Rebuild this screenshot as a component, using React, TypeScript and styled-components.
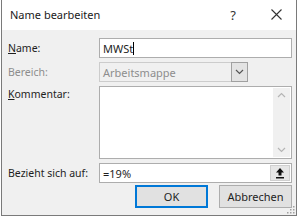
import * as React from 'react'
import styled, { createGlobalStyle } from 'styled-components'

const GlobalStyle = createGlobalStyle`
  html, body {
    margin: 0;
    padding: 0;
    background: #ffffff;
  }
  body {
    font-family: "Noto Sans", "DejaVu Sans", sans-serif;
    color: #1e1e1e;
  }
`

const Dialog = styled('div')`
  position: relative;
  margin-left: 1px;
  width: 294px;
  height: 215px;
  border: 1px solid #7a7a7a;
  border-top: none;
  background: #f0f0f0;
  display: flex;
  flex-direction: column;
`

const TitleBar = styled('div')`
  height: 30px;
  background: #ffffff;
  display: flex;
  align-items: center;
  padding-left: 8px;
  padding-bottom: 1px;
  box-sizing: border-box;
`

const Title = styled('div')`
  flex: 1;
  font-size: 11px;
  color: #1a1a1a;
`

const TitleButton = styled('div')<{ wide?: boolean }>`
  width: ${(p) => (p.wide ? '46px' : '40px')};
  height: 30px;
  display: flex;
  align-items: center;
  justify-content: center;
  color: #333;
  font-size: 13px;
`

const Body = styled('div')`
  padding: 8px 4px 0 6px;
  display: grid;
  grid-template-columns: 91px 193px;
  grid-template-rows: 20px 20px 73px 20px;
  row-gap: 4px;
  font-size: 10.5px;
`

const Label = styled('div')<{ disabled?: boolean; top?: boolean }>`
  display: flex;
  align-items: ${(p) => (p.top ? 'flex-start' : 'center')};
  padding-top: ${(p) => (p.top ? '1px' : '0')};
  color: ${(p) => (p.disabled ? '#8d8d8d' : '#1e1e1e')};
  u {
    text-decoration: underline;
    text-underline-offset: 1px;
  }
`

const Field = styled('div')<{ disabled?: boolean }>`
  box-sizing: border-box;
  border: 1px solid ${(p) => (p.disabled ? '#cccccc' : '#adadad')};
  background: ${(p) => (p.disabled ? '#f0f0f0' : '#ffffff')};
  color: ${(p) => (p.disabled ? '#8d8d8d' : '#1e1e1e')};
  display: flex;
  align-items: center;
  padding-left: 3px;
  font-size: 11px;
`

const Caret = styled('span')`
  display: inline-block;
  width: 1px;
  height: 13px;
  background: #000;
`

const SelectWrap = styled('div')`
  display: flex;
  width: 149px;
`

const SelectBox = styled(Field)`
  flex: 1;
  border-right: none;
`

const DropButton = styled('div')`
  width: 17px;
  box-sizing: border-box;
  border: 1px solid #a0a0a0;
  background: #e3e3e3;
  display: flex;
  align-items: center;
  justify-content: center;
`

const TextArea = styled('div')`
  box-sizing: border-box;
  border: 1px solid #adadad;
  background: #ffffff;
  display: flex;
  justify-content: flex-end;
  padding: 1px;
`

const ScrollBar = styled('div')`
  width: 17px;
  background: #f0f0f0;
  display: flex;
  flex-direction: column;
  justify-content: space-between;
  align-items: center;
  padding: 4px 0;
`

const RefField = styled(Field)`
  justify-content: space-between;
  padding-right: 1px;
`

const CollapseButton = styled('div')`
  width: 20px;
  height: 16px;
  box-sizing: border-box;
  border: 1px solid #cfcfcf;
  background: #e6e6e6;
  display: flex;
  align-items: center;
  justify-content: center;
`

const ButtonRow = styled('div')`
  display: flex;
  justify-content: flex-end;
  gap: 11px;
  padding: 2px 4px 0 0;
`

const Button = styled('div')<{ primary?: boolean }>`
  width: 73px;
  height: 23px;
  box-sizing: border-box;
  border: ${(p) => (p.primary ? '2px solid #0078d7' : '1px solid #adadad')};
  background: #e1e1e1;
  display: flex;
  align-items: center;
  justify-content: center;
  font-size: 11px;
  color: #1e1e1e;
`

const Grip = styled('svg')`
  position: absolute;
  right: 1px;
  bottom: 1px;
`

const Chevron = ({ up, color }: { up?: boolean; color: string }) => (
  <svg width="9" height="6" viewBox="0 0 9 6">
    <path
      d={up ? 'M1 5 L4.5 1.5 L8 5' : 'M1 1 L4.5 4.5 L8 1'}
      fill="none"
      stroke={color}
      strokeWidth="1.2"
    />
  </svg>
)

export default function App() {
  const dots = [
    [8, 2], [8, 5], [5, 5], [8, 8], [5, 8], [2, 8],
  ]
  return (
    <>
      <GlobalStyle />
      <Dialog>
        <TitleBar>
          <Title>Name bearbeiten</Title>
          <TitleButton wide>?</TitleButton>
          <TitleButton>
            <svg width="11" height="11" viewBox="0 0 11 11">
              <path d="M0.5 0.5 L10.5 10.5 M10.5 0.5 L0.5 10.5" stroke="#333" strokeWidth="1.1" />
            </svg>
          </TitleButton>
        </TitleBar>
        <Body>
          <Label>
            <span><u>N</u>ame:</span>
          </Label>
          <Field>
            MWSt<Caret />
          </Field>

          <Label disabled>Bereich:</Label>
          <SelectWrap>
            <SelectBox disabled>Arbeitsmappe</SelectBox>
            <DropButton>
              <Chevron color="#555" />
            </DropButton>
          </SelectWrap>

          <Label top>
            <span><u>K</u>ommentar:</span>
          </Label>
          <TextArea>
            <ScrollBar>
              <Chevron up color="#b5b5b5" />
              <Chevron color="#b5b5b5" />
            </ScrollBar>
          </TextArea>

          <Label>Bezieht sich auf:</Label>
          <RefField>
            =19%
            <CollapseButton>
              <svg width="10" height="12" viewBox="0 0 10 12">
                <path d="M5 1 L9 5.5 L6.5 5.5 L6.5 8.5 L3.5 8.5 L3.5 5.5 L1 5.5 Z" fill="#111" />
                <rect x="1" y="10" width="8" height="1.5" fill="#111" />
              </svg>
            </CollapseButton>
          </RefField>
        </Body>
        <ButtonRow>
          <Button primary>OK</Button>
          <Button>Abbrechen</Button>
        </ButtonRow>
        <Grip width="10" height="10" viewBox="0 0 10 10">
          {dots.map(([x, y]) => (
            <rect key={`${x}-${y}`} x={x} y={y} width="1.5" height="1.5" fill="#a0a0a0" />
          ))}
        </Grip>
      </Dialog>
    </>
  )
}
